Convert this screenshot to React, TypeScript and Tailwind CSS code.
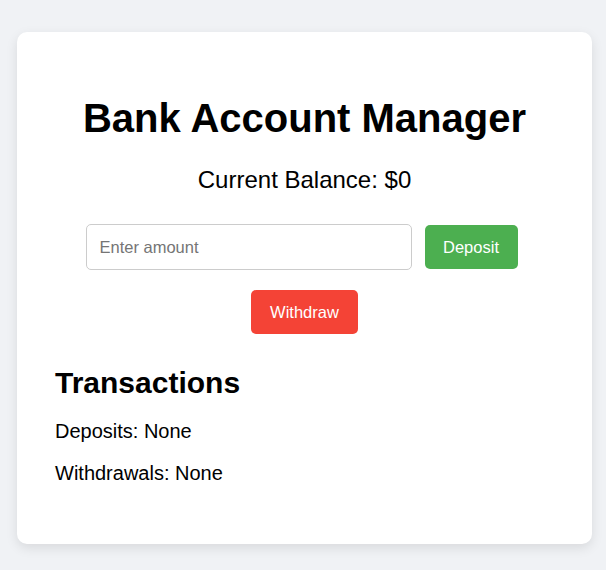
import { useState } from 'react';

export default function App() {
  const [amount, setAmount] = useState('');

  return (
    <div className="min-h-screen bg-[#f0f2f5] pt-[32px] pb-[26px] font-['Liberation_Sans',Arial,sans-serif] text-black">
      <div className="ml-[17px] w-[575px] bg-white rounded-[10px] shadow-[0_4px_12px_rgba(0,0,0,0.1)] pt-[63px] pb-[59px] px-[38px]">
        <h1 className="text-center text-[40px] leading-[46px] font-bold">Bank Account Manager</h1>
        <p className="mt-[25px] text-center text-[24px] leading-[28px]">Current Balance: $0</p>

        <div className="mt-[30px] flex items-center justify-center gap-[13px] pr-[6px]">
          <input
            type="text"
            value={amount}
            onChange={e => setAmount(e.target.value)}
            placeholder="Enter amount"
            className="w-[326px] h-[46px] px-[13px] border border-[#ccc] rounded-[5px] text-[16.5px] placeholder:text-[#757575] outline-none"
          />
          <button className="w-[93px] h-[44px] bg-[#4caf50] text-white text-[16.5px] rounded-[5px]">Deposit</button>
        </div>

        <div className="mt-[20px] flex justify-center">
          <button className="w-[107px] h-[44px] bg-[#f44336] text-white text-[16.5px] rounded-[5px]">Withdraw</button>
        </div>

        <div className="mt-[32px]">
          <h2 className="text-[30px] leading-[34px] font-bold">Transactions</h2>
          <p className="mt-[20px] text-[20px] leading-[23px]">Deposits: None</p>
          <p className="mt-[19px] text-[20px] leading-[23px]">Withdrawals: None</p>
        </div>
      </div>
    </div>
  );
}
